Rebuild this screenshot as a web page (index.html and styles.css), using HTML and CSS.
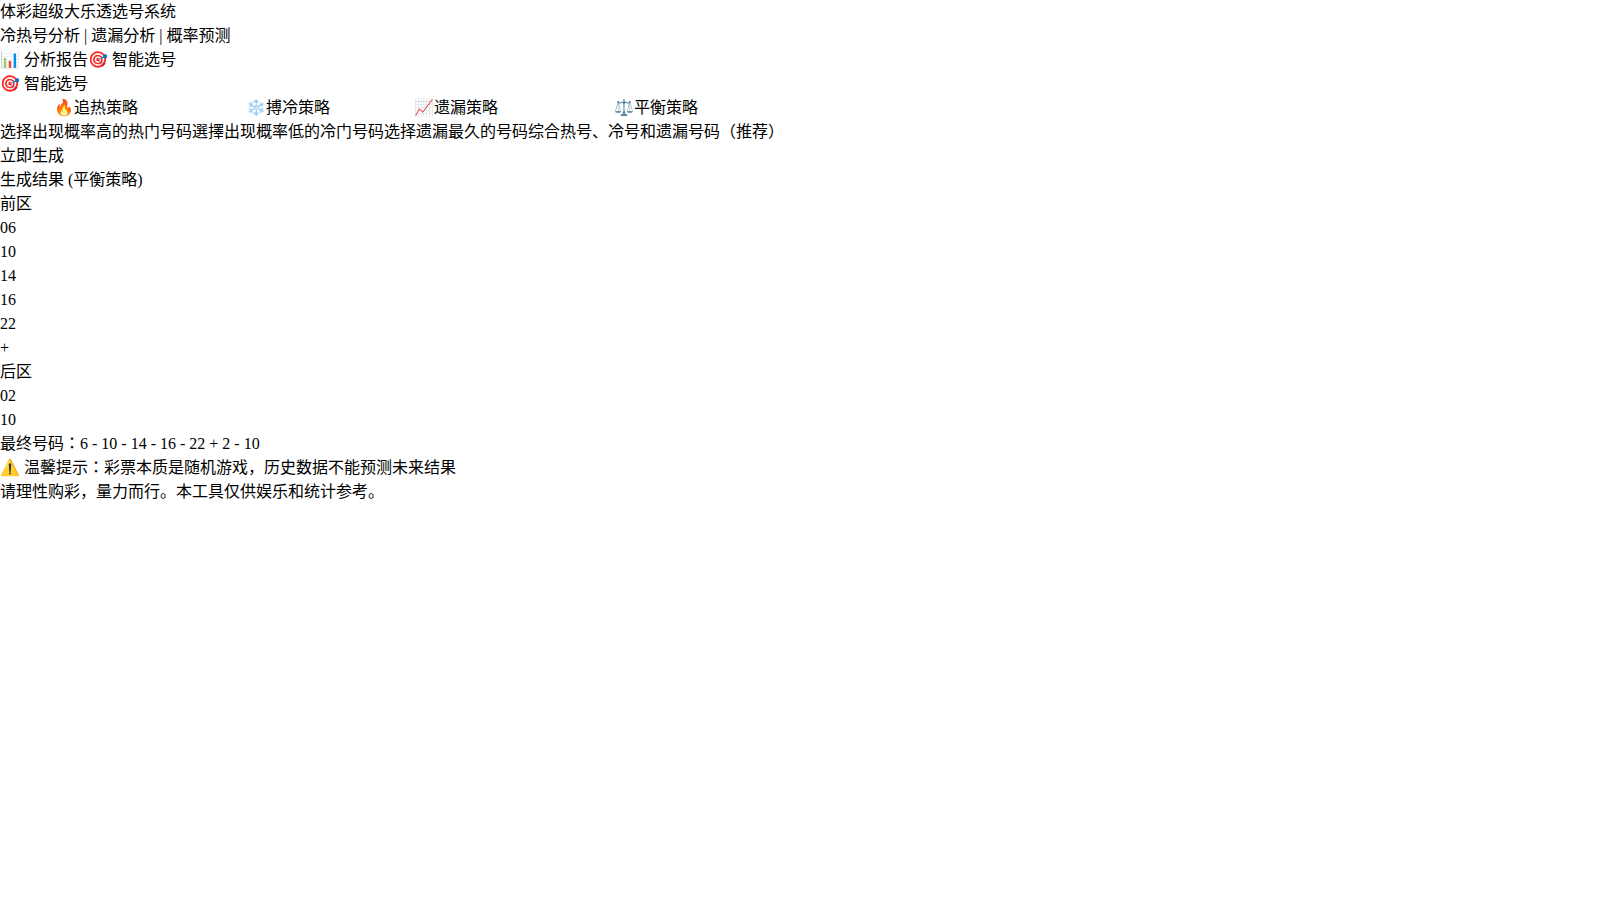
FILE: index.html
```html
<!DOCTYPE html>
<html lang="en">
<head>
  <meta charset="UTF-8" />
  <meta name="viewport" content="width=device-width, initial-scale=1.0" />
  <title>体彩超级大乐透选号系统</title>
  <link rel="stylesheet" href="styles.css">
</head>
<body>
  <header class="header">
    <h1>体彩超级大乐透选号系统</h1>
    <p>冷热号分析 | 遗漏分析 | 概率预测</p>
  </header>

  <nav class="tabs">
    <button type="button">📊 分析报告</button>
    <button type="button">🎯 智能选号</button>
  </nav>

  <main>
    <h2>🎯 智能选号</h2>

    <!-- Strategy picker -->
    <div class="strategies">
      <button type="button" class="strategy">
        <span class="strategy-name">🔥追热策略</span>
        <span class="strategy-desc">选择出现概率高的热门号码</span>
      </button>
      <button type="button" class="strategy">
        <span class="strategy-name">❄️搏冷策略</span>
        <span class="strategy-desc">選擇出现概率低的冷门号码</span>
      </button>
      <button type="button" class="strategy">
        <span class="strategy-name">📈遗漏策略</span>
        <span class="strategy-desc">选择遗漏最久的号码</span>
      </button>
      <button type="button" class="strategy">
        <span class="strategy-name">⚖️平衡策略</span>
        <span class="strategy-desc">综合热号、冷号和遗漏号码（推荐）</span>
      </button>
    </div>

    <button type="button" class="generate">立即生成</button>

    <!-- Generated numbers -->
    <section class="result">
      <h3>生成结果 (平衡策略)</h3>
      <h4>前区</h4>
      <div class="balls">
        <div>06</div>
        <div>10</div>
        <div>14</div>
        <div>16</div>
        <div>22</div>
      </div>
      <div class="plus">+</div>
      <h4>后区</h4>
      <div class="balls">
        <div>02</div>
        <div>10</div>
      </div>
      <p>最终号码：6 - 10 - 14 - 16 - 22 + 2 - 10</p>
    </section>
  </main>

  <footer class="footer">
    <p>⚠️ 温馨提示：彩票本质是随机游戏，历史数据不能预测未来结果</p>
    <p>请理性购彩，量力而行。本工具仅供娱乐和统计参考。</p>
  </footer>
</body>
</html>
```
FILE: styles.css
```css
/* Reset default margins, paddings and heading sizes */
* {
  box-sizing: border-box;
  margin: 0;
  padding: 0;
}

body {
  font-family: "Liberation Serif", "Noto Sans CJK JP", serif;
  font-size: 16px;
  line-height: 24px;
  background: #fff;
  color: #000;
}

h1,
h2,
h3,
h4 {
  font-size: inherit;
  font-weight: inherit;
}

button {
  font: inherit;
  color: inherit;
  background: transparent;
  border: none;
  cursor: pointer;
}

.tabs {
  display: flex;
}

.strategies {
  display: flex;
}

.strategy {
  display: flex;
  flex-direction: column;
  align-items: center;
}

.generate {
  display: block;
}
```
